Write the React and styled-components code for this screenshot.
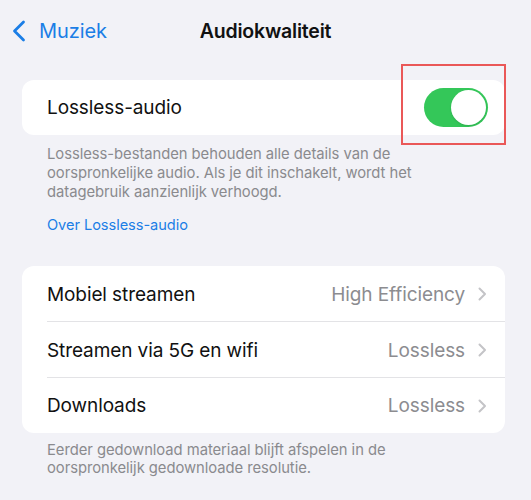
import React from "react";
import styled, { createGlobalStyle } from "styled-components";

const GlobalStyle = createGlobalStyle`
  html, body {
    margin: 0;
    padding: 0;
    background: #f2f2f7;
  }
  body {
    font-family: Inter, "Noto Sans", "Liberation Sans", sans-serif;
    -webkit-font-smoothing: antialiased;
  }
`;

const Screen = styled.div`
  width: 531px;
  height: 500px;
  background: #f2f2f7;
  overflow: hidden;
  box-sizing: border-box;
`;

const NavBar = styled.div`
  position: relative;
  height: 60px;
  padding-top: 2px;
  box-sizing: border-box;
  display: flex;
  align-items: center;
  justify-content: center;
`;

const BackButton = styled.div`
  position: absolute;
  left: 12px;
  top: 2px;
  bottom: 0;
  display: flex;
  align-items: center;
  gap: 13px;
  color: #1b7ee6;
  font-size: 20px;
  letter-spacing: -0.1px;
`;

const Title = styled.div`
  font-size: 19.5px;
  font-weight: 600;
  color: #111;
  letter-spacing: -0.2px;
`;

const Content = styled.div`
  padding: 20px 26px 0 22px;
  display: flex;
  flex-direction: column;
`;

const Card = styled.div`
  position: relative;
  background: #ffffff;
  border-radius: 12px;
  display: flex;
  flex-direction: column;
`;

const Row = styled.div`
  height: ${(p) => p.$h || 55}px;
  display: flex;
  align-items: center;
  padding: 0 18px 0 25px;
  position: relative;
  ${(p) =>
    p.$divider &&
    `&::after {
      content: "";
      position: absolute;
      left: 25px;
      right: 0;
      bottom: 0;
      height: 1px;
      background: #e3e3e6;
    }`}
`;

const Label = styled.div`
  flex: 1;
  font-size: 19px;
  color: #111;
  letter-spacing: -0.1px;
`;

const Value = styled.div`
  font-size: 19px;
  color: #8c8c90;
  letter-spacing: -0.1px;
`;

const Chevron = styled.svg`
  width: 9px;
  height: 14px;
  margin-left: 13px;
  flex-shrink: 0;
`;

const Toggle = styled.div`
  width: 64px;
  height: 39px;
  border-radius: 20px;
  background: #34c759;
  position: relative;
  margin-right: -1px;
`;

const Knob = styled.div`
  position: absolute;
  right: 2px;
  top: 2px;
  width: 35px;
  height: 35px;
  border-radius: 50%;
  background: #fff;
  box-shadow: 0 1px 2px rgba(0, 0, 0, 0.12);
`;

const Highlight = styled.div`
  position: absolute;
  right: -1px;
  top: -16px;
  width: 105px;
  height: 81px;
  border: 2px solid #ea5858;
  box-sizing: border-box;
  pointer-events: none;
`;

const Footnote = styled.p`
  margin: 0;
  padding: ${(p) => p.$top ?? 10}px 78px 0 25px;
  font-size: 14.8px;
  line-height: ${(p) => p.$lh ?? 19}px;
  color: #8a8a8e;
  letter-spacing: -0.05px;
`;

const Link = styled.div`
  padding: 14px 25px 0;
  font-size: 14.6px;
  color: #1b7ee6;
  letter-spacing: -0.05px;
`;

const Spacer = styled.div`
  height: ${(p) => p.$h}px;
`;

const ChevronRight = () => (
  <Chevron viewBox="0 0 9 14">
    <path
      d="M1.5 1.5 L7 7 L1.5 12.5"
      fill="none"
      stroke="#c4c4c7"
      strokeWidth="2"
      strokeLinecap="round"
      strokeLinejoin="round"
    />
  </Chevron>
);

const rows = [
  { label: "Mobiel streamen", value: "High Efficiency" },
  { label: "Streamen via 5G en wifi", value: "Lossless" },
  { label: "Downloads", value: "Lossless" },
];

export default function App() {
  return (
    <>
      <GlobalStyle />
      <Screen>
        <NavBar>
          <BackButton>
            <svg width="14" height="22" viewBox="0 0 14 22">
              <path
                d="M11.5 2 L2.5 11 L11.5 20"
                fill="none"
                stroke="#1b7ee6"
                strokeWidth="2.8"
                strokeLinecap="round"
                strokeLinejoin="round"
              />
            </svg>
            Muziek
          </BackButton>
          <Title>Audiokwaliteit</Title>
        </NavBar>
        <Content>
          <Card>
            <Row $h={55}>
              <Label>Lossless-audio</Label>
              <Toggle>
                <Knob />
              </Toggle>
            </Row>
            <Highlight />
          </Card>
          <Footnote>
            Lossless-bestanden behouden alle details van de oorspronkelijke
            audio. Als je dit inschakelt, wordt het datagebruik aanzienlijk
            verhoogd.
          </Footnote>
          <Link>Over Lossless-audio</Link>
          <Spacer $h={32} />
          <Card>
            {rows.map((r, i) => (
              <Row key={r.label} $h={i === 2 ? 55 : 56} $divider={i < rows.length - 1}>
                <Label>{r.label}</Label>
                <Value>{r.value}</Value>
                <ChevronRight />
              </Row>
            ))}
          </Card>
          <Footnote $top={8} $lh={18}>
            Eerder gedownload materiaal blijft afspelen in de oorspronkelijk
            gedownloade resolutie.
          </Footnote>
        </Content>
      </Screen>
    </>
  );
}
